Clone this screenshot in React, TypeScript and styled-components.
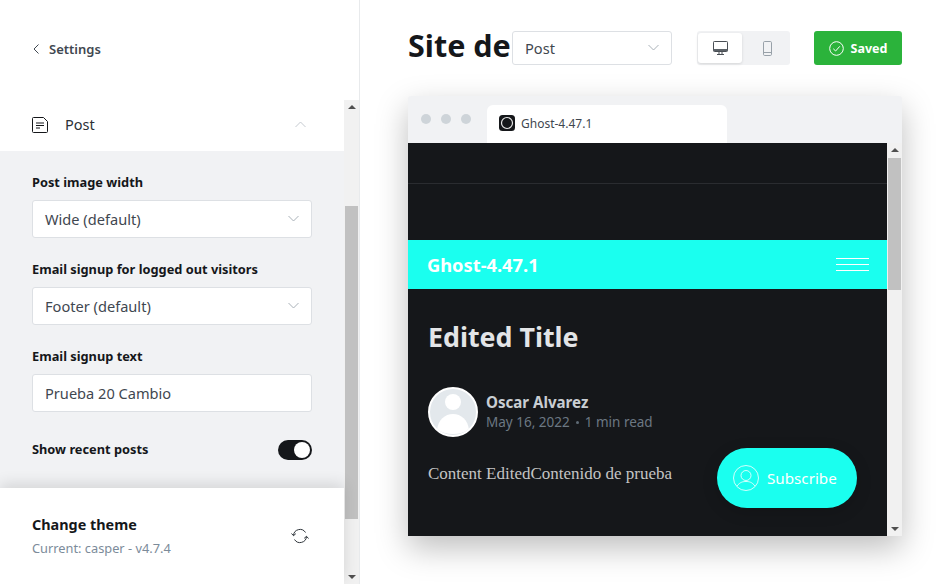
import styled, { createGlobalStyle } from "styled-components";

const GlobalStyle = createGlobalStyle`
  html, body {
    margin: 0;
    padding: 0;
    height: 584px;
    overflow: hidden;
    background: #ffffff;
    font-family: "Noto Sans", "Open Sans", sans-serif;
    color: #15171a;
  }
  * { box-sizing: border-box; }
`;

const Page = styled.div`
  display: flex;
  width: 950px;
  height: 584px;
  overflow: hidden;
`;

const Sidebar = styled.aside`
  position: relative;
  display: flex;
  flex-direction: column;
  flex: none;
  width: 360px;
  height: 584px;
  border-right: 1px solid #e8eaec;
`;

const SidebarHeader = styled.div`
  display: flex;
  align-items: center;
  gap: 10px;
  flex: none;
  height: 100px;
  padding: 0 0 2px 33px;
  font-size: 13px;
  font-weight: 600;
  color: #3f4750;
`;

const SidebarBody = styled.div`
  display: flex;
  flex: 1;
  min-height: 0;
`;

const SidebarContent = styled.div`
  flex: 1;
  min-width: 0;
`;

const SectionHead = styled.div`
  display: flex;
  align-items: center;
  height: 51px;
  padding: 0 38px 2px 32px;
  font-size: 14.5px;
  color: #2b3036;
`;

const SectionTitle = styled.span`
  flex: 1;
  margin: -2px 0 0 17px;
`;

const SectionBody = styled.div`
  display: flex;
  flex-direction: column;
  height: 340px;
  padding: 22px 32px 0;
  background: #f1f2f4;
`;

const Field = styled.div`
  display: flex;
  flex-direction: column;
  height: 87px;
`;

const Label = styled.label`
  display: block;
  height: 27px;
  padding-top: 1px;
  font-size: 12.8px;
  line-height: 17px;
  font-weight: 700;
  color: #15171a;
`;

const Control = styled.div<{ $w?: number; $h?: number }>`
  display: flex;
  align-items: center;
  justify-content: space-between;
  flex: none;
  width: ${(p) => p.$w ?? 280}px;
  height: ${(p) => p.$h ?? 38}px;
  padding: 0 12px 1px 12px;
  background: #ffffff;
  border: 1px solid #dde0e4;
  border-radius: 3px;
  font-size: 14.6px;
  color: #3f4750;
`;

const ToggleRow = styled.div`
  display: flex;
  align-items: center;
  justify-content: space-between;
  height: 20px;
  margin-top: 6px;
  line-height: 18px;
  font-size: 12.8px;
  font-weight: 700;
`;

const ToggleText = styled.span`
  margin-top: -2px;
`;

const Toggle = styled.div`
  display: flex;
  justify-content: flex-end;
  align-items: center;
  width: 34px;
  height: 20px;
  padding: 2px;
  border-radius: 10px;
  background: #15171a;
`;

const Knob = styled.div`
  width: 16px;
  height: 16px;
  border-radius: 50%;
  background: #ffffff;
`;

const Scrollbar = styled.div<{ $width: number }>`
  display: flex;
  flex-direction: column;
  align-items: center;
  flex: none;
  width: ${(p) => p.$width}px;
  background: #f1f1f1;
`;

const ScrollArrow = styled.div<{ $down?: boolean }>`
  flex: none;
  width: 0;
  height: 0;
  margin: 5px 0;
  border-left: 4px solid transparent;
  border-right: 4px solid transparent;
  ${(p) =>
    p.$down
      ? "border-top: 4px solid #505050;"
      : "border-bottom: 4px solid #505050;"}
`;

const ScrollTrack = styled.div`
  flex: 1;
  width: 100%;
  min-height: 0;
`;

const ScrollThumb = styled.div<{ $top: number; $height: number }>`
  width: calc(100% - 2px);
  height: ${(p) => p.$height}px;
  margin: ${(p) => p.$top}px 1px 0;
  background: #c1c1c1;
`;

const Footer = styled.div`
  position: absolute;
  left: 0;
  bottom: 0;
  display: flex;
  align-items: center;
  justify-content: space-between;
  width: 344px;
  height: 96px;
  padding: 0 35px 0 32px;
  background: #ffffff;
  box-shadow: 0 -4px 14px rgba(0, 0, 0, 0.12);
`;

const FooterTitle = styled.div`
  font-size: 14.4px;
  line-height: 20px;
  font-weight: 700;
  color: #15171a;
`;

const FooterSub = styled.div`
  margin-top: 4px;
  font-size: 12.8px;
  line-height: 18px;
  color: #7c8b9a;
`;

const Main = styled.main`
  flex: 1;
  min-width: 0;
  padding: 31px 48px 0;
`;

const Toolbar = styled.div`
  display: flex;
  align-items: center;
  height: 34px;
`;

const PageTitle = styled.h1`
  flex: none;
  width: 104px;
  margin: -6px 0 0;
  white-space: nowrap;
  font-size: 30.5px;
  line-height: 34px;
  font-weight: 700;
  color: #15171a;
`;

const DeviceSwitch = styled.div`
  display: flex;
  flex: none;
  width: 93px;
  height: 34px;
  margin-left: 25px;
  padding: 2px 0 2px 1px;
  background: #f1f2f4;
  border-radius: 3px;
`;

const DeviceButton = styled.div<{ $active?: boolean }>`
  display: flex;
  align-items: center;
  justify-content: center;
  flex: ${(p) => (p.$active ? "none" : "1")};
  width: 44px;
  height: 30px;
  padding-left: ${(p) => (p.$active ? 0 : 2)}px;
  border-radius: 3px;
  background: ${(p) => (p.$active ? "#ffffff" : "transparent")};
  box-shadow: ${(p) => (p.$active ? "0 1px 3px rgba(0,0,0,0.12)" : "none")};
`;

const SavedButton = styled.button`
  display: flex;
  align-items: center;
  justify-content: center;
  gap: 7px;
  flex: none;
  width: 88px;
  height: 34px;
  margin-left: 24px;
  padding: 0;
  border: 0;
  border-radius: 3px;
  background: #2bb33b;
  color: #ffffff;
  font-family: inherit;
  font-size: 12.5px;
  font-weight: 700;
`;

const BrowserFrame = styled.div`
  width: 494px;
  height: 440px;
  margin-top: 31px;
  border-radius: 3px 3px 0 0;
  background: #f1f2f4;
  box-shadow: 0 12px 32px rgba(0, 0, 0, 0.26);
`;

const ChromeBar = styled.div`
  display: flex;
  align-items: flex-end;
  height: 47px;
  padding-left: 13px;
`;

const Dots = styled.div`
  display: flex;
  gap: 10px;
  align-self: flex-start;
  margin-top: 18px;
`;

const Dot = styled.span`
  width: 10px;
  height: 10px;
  border-radius: 50%;
  background: #ced4d9;
`;

const Tab = styled.div`
  display: flex;
  align-items: center;
  gap: 6px;
  width: 240px;
  height: 38px;
  margin-left: 16px;
  padding: 0 12px 2px;
  background: #ffffff;
  border-radius: 6px 6px 0 0;
  font-size: 12px;
  color: #3f4750;
`;

const Viewport = styled.div`
  display: flex;
  height: 393px;
  background: #15171a;
`;

const Site = styled.div`
  position: relative;
  flex: 1;
  min-width: 0;
  overflow: hidden;
`;

const SiteTop = styled.div`
  height: 41px;
  border-bottom: 1px solid #2a2c30;
`;

const SiteNav = styled.div`
  display: flex;
  align-items: center;
  justify-content: space-between;
  height: 49px;
  margin-top: 56px;
  padding: 0 18px 0 19px;
  background: #1affef;
  color: #ffffff;
  font-size: 18.3px;
  font-weight: 700;
`;

const Burger = styled.div`
  display: flex;
  flex-direction: column;
  gap: 5px;
  width: 33px;
`;

const BurgerLine = styled.span`
  height: 1px;
  background: #ffffff;
`;

const Article = styled.article`
  padding: 30px 20px 0;
`;

const ArticleTitle = styled.h2`
  margin: 0;
  font-size: 26.8px;
  line-height: 36px;
  font-weight: 700;
  color: #e3e5e7;
`;

const Byline = styled.div`
  display: flex;
  align-items: center;
  gap: 8px;
  margin-top: 32px;
`;

const Avatar = styled.div`
  flex: none;
  width: 50px;
  height: 50px;
  overflow: hidden;
  border-radius: 50%;
  border: 2px solid #ffffff;
  background: #e3e8ec;
`;

const AuthorName = styled.div`
  font-size: 15.1px;
  line-height: 20px;
  font-weight: 700;
  color: #c9ced3;
`;

const PostMeta = styled.div`
  display: flex;
  align-items: center;
  font-size: 13.5px;
  line-height: 20px;
  color: #6c7883;
`;

const MetaDot = styled.span`
  width: 3px;
  height: 3px;
  margin: 1px 6px 0 6px;
  border-radius: 50%;
  background: #5f6b76;
`;

const Body = styled.p`
  margin: 26px 0 0;
  font-family: "Liberation Serif", serif;
  font-size: 17px;
  line-height: 22px;
  color: #c4c4c4;
`;

const SubscribeButton = styled.div`
  position: absolute;
  left: 309px;
  top: 305px;
  display: flex;
  align-items: center;
  gap: 8px;
  width: 140px;
  height: 60px;
  padding-left: 16px;
  border-radius: 30px;
  background: #1affef;
  color: #ffffff;
  font-size: 15.2px;
  box-shadow: 0 4px 16px rgba(0, 0, 0, 0.16);
`;

const Chevron = ({ up, color = "#a9b1b8" }: { up?: boolean; color?: string }) => (
  <svg width="11" height="11" viewBox="0 0 11 11" fill="none" stroke={color} strokeWidth="1">
    <path d={up ? "M.5 8 5.500 3l5 5" : "M.5 3l5 5 5-5"} />
  </svg>
);

const PostIcon = () => (
  <svg width="16" height="16" viewBox="0 0 16 16" fill="none" stroke="#15171a" strokeWidth="1">
    <path d="M.5 1.500a1 1 0 0 1 1-1h10L15.500 4.500V14.500a1 1 0 0 1-1 1h-13a1 1 0 0 1-1-1z" />
    <path d="M4 6h8M4 8.500h8M4 11h4" />
  </svg>
);

const DesktopIcon = () => (
  <svg width="15" height="14" viewBox="0 0 15 14" fill="none" stroke="#4a4f55">
    <rect x=".5" y=".5" width="14" height="10" rx=".8" />
    <path d="M.5 9h14" stroke="#5b6167" strokeWidth="2" />
    <path d="M4 13.500h7M6 11v2.500M9 11v2.500" />
  </svg>
);

const MobileIcon = () => (
  <svg width="9" height="15" viewBox="0 0 9 15" fill="none" stroke="#98a1a9">
    <rect x=".5" y=".5" width="8" height="14" rx="1.200" />
    <path d="M.5 11.500h8" />
  </svg>
);

const CheckIcon = () => (
  <svg width="15" height="15" viewBox="0 0 15 15" fill="none" stroke="#ffffff">
    <circle cx="7.500" cy="7.500" r="6.800" />
    <path d="M4.300 7.800l2.300 2.200 4.200-4.700" />
  </svg>
);

const RefreshIcon = () => (
  <svg width="18" height="16" viewBox="0 0 18 16" fill="none" stroke="#2f353b">
    <path d="M2.500 7.500A6.500 6.500 0 0 1 14.500 4.500" />
    <path d="M15.500 8.500A6.500 6.500 0 0 1 3.500 11.500" />
    <path d="M.5 5.500l2 2.200 2.300-2M17.500 10.500l-2-2.200-2.300 2" />
  </svg>
);

const Favicon = () => (
  <svg width="16" height="16" viewBox="0 0 16 16">
    <rect width="16" height="16" rx="3.500" fill="#15171a" />
    <circle cx="8" cy="8" r="5.500" fill="none" stroke="#e8e8e8" strokeWidth="1.200" />
  </svg>
);

const UserPlaceholder = () => (
  <svg width="46" height="46" viewBox="0 0 46 46" fill="#ffffff">
    <circle cx="23" cy="13" r="8" />
    <path d="M7 41C8 31 15 25 23 25S38 31 39 41Q23 49 7 41z" />
  </svg>
);

const SubscribeIcon = () => (
  <svg width="26" height="26" viewBox="0 0 26 26" fill="none" stroke="#ffffff" strokeWidth="0.800">
    <circle cx="13" cy="13" r="12.500" />
    <circle cx="13" cy="10.500" r="5" />
    <path d="M4 21c3-4 6-4.500 9-4.500s6 .500 9 4.500" />
  </svg>
);

const App = () => (
  <Page>
    <GlobalStyle />
    <Sidebar>
      <SidebarHeader>
        <svg width="6" height="10" viewBox="0 0 6 10" fill="none" stroke="#3f4750">
          <path d="M5.500.5 1 5l4.500 4.500" />
        </svg>
        Settings
      </SidebarHeader>
      <SidebarBody>
        <SidebarContent>
          <SectionHead>
            <PostIcon />
            <SectionTitle>Post</SectionTitle>
            <Chevron up color="#c5cad0" />
          </SectionHead>
          <SectionBody>
            <Field>
              <Label>Post image width</Label>
              <Control>
                Wide (default)
                <Chevron />
              </Control>
            </Field>
            <Field>
              <Label>Email signup for logged out visitors</Label>
              <Control>
                Footer (default)
                <Chevron />
              </Control>
            </Field>
            <Field>
              <Label>Email signup text</Label>
              <Control>Prueba 20 Cambio</Control>
            </Field>
            <ToggleRow>
              <ToggleText>Show recent posts</ToggleText>
              <Toggle>
                <Knob />
              </Toggle>
            </ToggleRow>
          </SectionBody>
        </SidebarContent>
        <Scrollbar $width={15}>
          <ScrollArrow />
          <ScrollTrack>
            <ScrollThumb $top={92} $height={313} />
          </ScrollTrack>
          <ScrollArrow $down />
        </Scrollbar>
      </SidebarBody>
      <Footer>
        <div>
          <FooterTitle>Change theme</FooterTitle>
          <FooterSub>Current: casper - v4.7.4</FooterSub>
        </div>
        <RefreshIcon />
      </Footer>
    </Sidebar>
    <Main>
      <Toolbar>
        <PageTitle>Site de</PageTitle>
        <Control $w={160} $h={34}>
          Post
          <Chevron />
        </Control>
        <DeviceSwitch>
          <DeviceButton $active>
            <DesktopIcon />
          </DeviceButton>
          <DeviceButton>
            <MobileIcon />
          </DeviceButton>
        </DeviceSwitch>
        <SavedButton>
          <CheckIcon />
          Saved
        </SavedButton>
      </Toolbar>
      <BrowserFrame>
        <ChromeBar>
          <Dots>
            <Dot />
            <Dot />
            <Dot />
          </Dots>
          <Tab>
            <Favicon />
            Ghost-4.47.1
          </Tab>
        </ChromeBar>
        <Viewport>
          <Site>
            <SiteTop />
            <SiteNav>
              Ghost-4.47.1
              <Burger>
                <BurgerLine />
                <BurgerLine />
                <BurgerLine />
              </Burger>
            </SiteNav>
            <Article>
              <ArticleTitle>Edited Title</ArticleTitle>
              <Byline>
                <Avatar>
                  <UserPlaceholder />
                </Avatar>
                <div>
                  <AuthorName>Oscar Alvarez</AuthorName>
                  <PostMeta>
                    May 16, 2022
                    <MetaDot />1 min read
                  </PostMeta>
                </div>
              </Byline>
              <Body>Content EditedContenido de prueba</Body>
            </Article>
            <SubscribeButton>
              <SubscribeIcon />
              Subscribe
            </SubscribeButton>
          </Site>
          <Scrollbar $width={15}>
            <ScrollArrow />
            <ScrollTrack>
              <ScrollThumb $top={1} $height={132} />
            </ScrollTrack>
            <ScrollArrow $down />
          </Scrollbar>
        </Viewport>
      </BrowserFrame>
    </Main>
  </Page>
);

export default App;
